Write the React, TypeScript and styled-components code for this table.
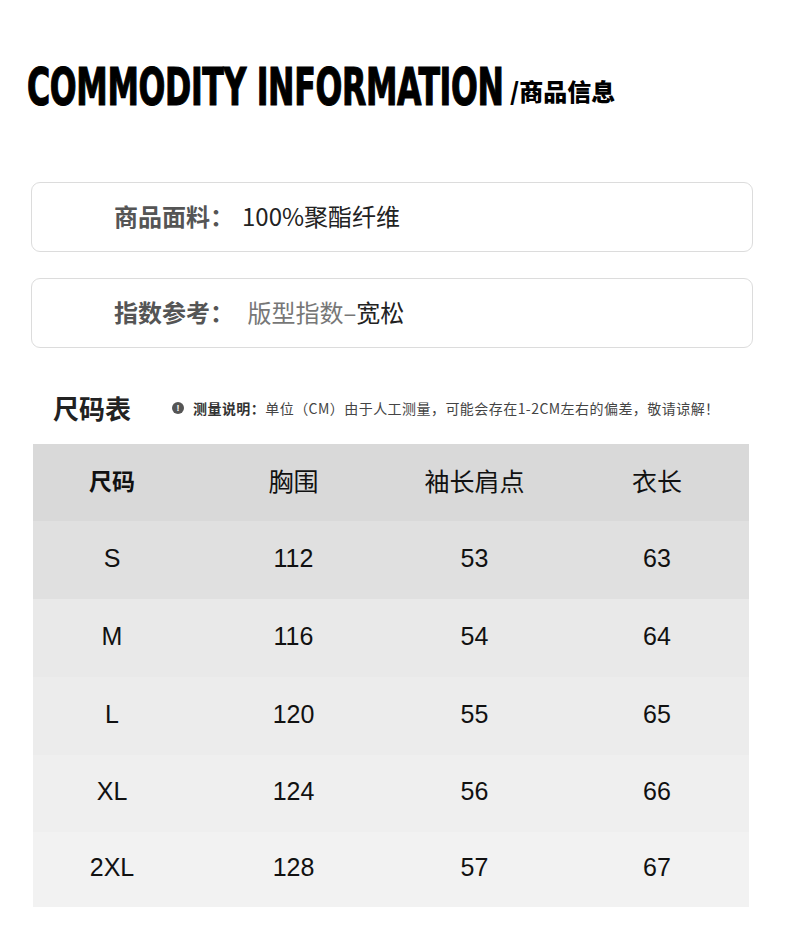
import React from "react";
import styled, { createGlobalStyle } from "styled-components";

const GlobalStyle = createGlobalStyle`
  body {
    margin: 0;
    background: #fff;
    font-family: "Noto Sans CJK SC", "Noto Sans", sans-serif;
  }
`;

const Page = styled.div`
  width: 790px;
  height: 926px;
  background: #fff;
  overflow: hidden;
`;

const Header = styled.div`
  display: flex;
  align-items: flex-end;
  padding: 62px 0 0 27px;
  height: 50px;
`;

const TitleBox = styled.div`
  width: 483px;
  height: 50px;
  overflow: visible;
`;

const BigTitle = styled.h1`
  margin: 0;
  display: inline-block;
  white-space: nowrap;
  font-family: "DejaVu Sans Condensed", "DejaVu Sans", sans-serif;
  font-stretch: condensed;
  font-weight: 700;
  font-size: 52px;
  line-height: 50px;
  color: #000;
  -webkit-text-stroke: 1.2px #000;
  transform: scaleX(0.675);
  transform-origin: left center;
  letter-spacing: -0.5px;
`;

const SubTitle = styled.span`
  font-family: "Noto Sans CJK SC", sans-serif;
  font-weight: 900;
  font-size: 24px;
  line-height: 26px;
  color: #000;
  margin-bottom: 8px;
`;

const InfoList = styled.div`
  display: flex;
  flex-direction: column;
  gap: 26px;
  margin: 70px 37px 0 31px;
`;

const InfoCard = styled.div`
  box-sizing: content-box;
  height: 66px;
  padding: 0 0 2px 82px;
  border: 1px solid #dcdcdc;
  border-radius: 9px;
  display: flex;
  align-items: center;
  font-size: 24px;
  line-height: 30px;
`;

const Label = styled.span`
  font-weight: 700;
  color: #555;
  margin-right: 8px;
`;

const Value = styled.span<{ $muted?: boolean }>`
  color: ${(p) => (p.$muted ? "#777" : "#222")};
  font-weight: 400;
`;

const ChartHead = styled.div`
  display: flex;
  align-items: center;
  margin: 39px 0 0 53px;
  height: 40px;
`;

const ChartTitle = styled.h2`
  margin: 0;
  font-size: 26px;
  font-weight: 700;
  color: #222;
  width: 119px;
`;

const Note = styled.div`
  display: flex;
  align-items: center;
  font-size: 14px;
  color: #444;
  letter-spacing: 0.45px;
  white-space: nowrap;
  margin-top: 2px;
`;

const NoteLead = styled.span`
  font-weight: 700;
  color: #333;
`;

const NoteIcon = styled.span`
  width: 12px;
  height: 12px;
  border-radius: 50%;
  background: #555;
  color: #fff;
  font-size: 9px;
  font-weight: 700;
  line-height: 12px;
  text-align: center;
  font-family: "Liberation Sans", sans-serif;
  margin-right: 9px;
  letter-spacing: 0;
`;

const Table = styled.div`
  margin: 17px 0 0 33px;
  width: 716px;
`;

const Row = styled.div<{ $bg: string; $h: number }>`
  display: grid;
  grid-template-columns: 170px 181px 181px 184px;
  height: ${(p) => p.$h}px;
  background: ${(p) => p.$bg};
  align-items: center;
`;

const Cell = styled.div<{ $head?: boolean; $bold?: boolean }>`
  text-align: center;
  color: #111;
  font-family: ${(p) =>
    p.$head ? `"Noto Sans CJK SC", sans-serif` : `"Liberation Sans", "Noto Sans CJK SC", sans-serif`};
  font-size: ${(p) => (p.$head ? (p.$bold ? 23 : 25) : 25)}px;
  font-weight: ${(p) => (p.$bold ? 700 : 400)};
  margin-top: ${(p) => (p.$head ? -6 : -4)}px;

  &:first-child {
    padding-right: 12px;
  }
`;

const rows = [
  { size: "S", chest: 112, sleeve: 53, length: 63, bg: "#e0e0e0", h: 78 },
  { size: "M", chest: 116, sleeve: 54, length: 64, bg: "#e9e9e9", h: 78 },
  { size: "L", chest: 120, sleeve: 55, length: 65, bg: "#ececec", h: 78 },
  { size: "XL", chest: 124, sleeve: 56, length: 66, bg: "#efefef", h: 77 },
  { size: "2XL", chest: 128, sleeve: 57, length: 67, bg: "#f2f2f2", h: 75 },
];

export default function App() {
  return (
    <Page>
      <GlobalStyle />
      <Header>
        <TitleBox>
          <BigTitle>COMMODITY INFORMATION</BigTitle>
        </TitleBox>
        <SubTitle>/商品信息</SubTitle>
      </Header>

      <InfoList>
        <InfoCard>
          <Label>商品面料：</Label>
          <Value>100%聚酯纤维</Value>
        </InfoCard>
        <InfoCard>
          <Label>指数参考：</Label>
          <Value $muted>&nbsp;版型指数–</Value>
          <Value>宽松</Value>
        </InfoCard>
      </InfoList>

      <ChartHead>
        <ChartTitle>尺码表</ChartTitle>
        <Note>
          <NoteIcon>!</NoteIcon>
          <NoteLead>测量说明：</NoteLead>单位（CM）由于人工测量，可能会存在1-2CM左右的偏差，敬请谅解！
        </Note>
      </ChartHead>

      <Table>
        <Row $bg="#d9d9d9" $h={77}>
          <Cell $head $bold>尺码</Cell>
          <Cell $head>胸围</Cell>
          <Cell $head>袖长肩点</Cell>
          <Cell $head>衣长</Cell>
        </Row>
        {rows.map((r) => (
          <Row key={r.size} $bg={r.bg} $h={r.h}>
            <Cell>{r.size}</Cell>
            <Cell>{r.chest}</Cell>
            <Cell>{r.sleeve}</Cell>
            <Cell>{r.length}</Cell>
          </Row>
        ))}
      </Table>
    </Page>
  );
}
